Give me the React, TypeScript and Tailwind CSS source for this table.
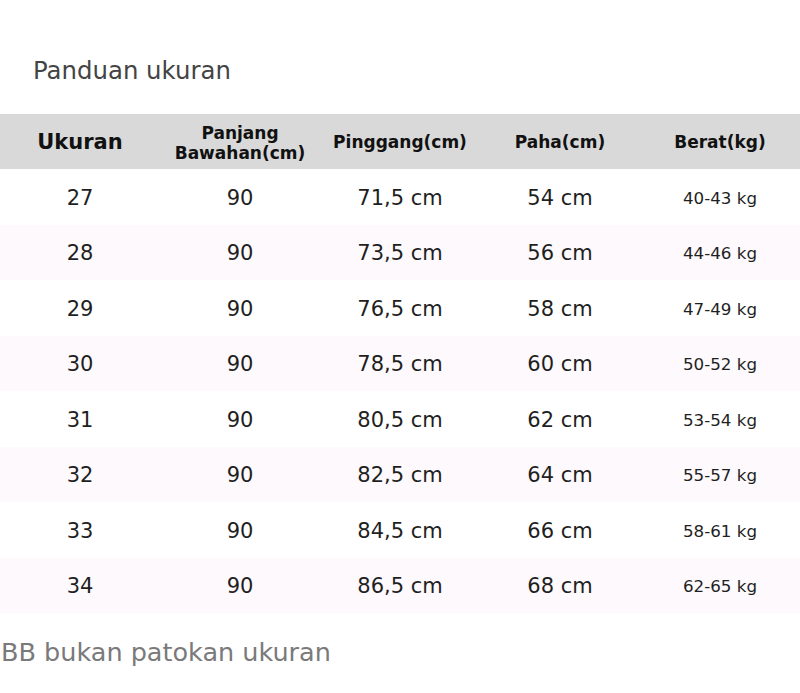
import React from "react";

const rows = [
  ["27", "90", "71,5 cm", "54 cm", "40-43 kg"],
  ["28", "90", "73,5 cm", "56 cm", "44-46 kg"],
  ["29", "90", "76,5 cm", "58 cm", "47-49 kg"],
  ["30", "90", "78,5 cm", "60 cm", "50-52 kg"],
  ["31", "90", "80,5 cm", "62 cm", "53-54 kg"],
  ["32", "90", "82,5 cm", "64 cm", "55-57 kg"],
  ["33", "90", "84,5 cm", "66 cm", "58-61 kg"],
  ["34", "90", "86,5 cm", "68 cm", "62-65 kg"],
];

export default function App() {
  return (
    <div className="w-[800px] h-[693px] bg-white overflow-hidden font-['DejaVu_Sans',sans-serif]">
      <div className="pt-[56px] pl-[33px] text-[24.4px] leading-[30px] text-[#444444]">Panduan ukuran</div>
      <div className="mt-[28px]">
        <div className="grid grid-cols-5 h-[55px] bg-[#d9d9d9] text-[#111111] font-bold items-center text-center pt-[2px]">
          <div className="text-[21px]">Ukuran</div>
          <div className="text-[17px] leading-[20px]">Panjang<br />Bawahan(cm)</div>
          <div className="text-[17px]">Pinggang(cm)</div>
          <div className="text-[17px]">Paha(cm)</div>
          <div className="text-[17px]">Berat(kg)</div>
        </div>
        {rows.map((r, i) => (
          <div
            key={i}
            className={`grid grid-cols-5 h-[55.5px] items-center text-center text-[#1f1f1f] pt-[3px] ${i % 2 === 1 ? "bg-[#fdf9fc]" : "bg-white"}`}
          >
            <div className="text-[21px]">{r[0]}</div>
            <div className="text-[21px]">{r[1]}</div>
            <div className="text-[21px]">{r[2]}</div>
            <div className="text-[21px]">{r[3]}</div>
            <div className="text-[16.7px]">{r[4]}</div>
          </div>
        ))}
      </div>
      <div className="mt-[24px] pl-[1px] text-[25.5px] leading-[30px] text-[#7a7a7a]">BB bukan patokan ukuran</div>
    </div>
  );
}
